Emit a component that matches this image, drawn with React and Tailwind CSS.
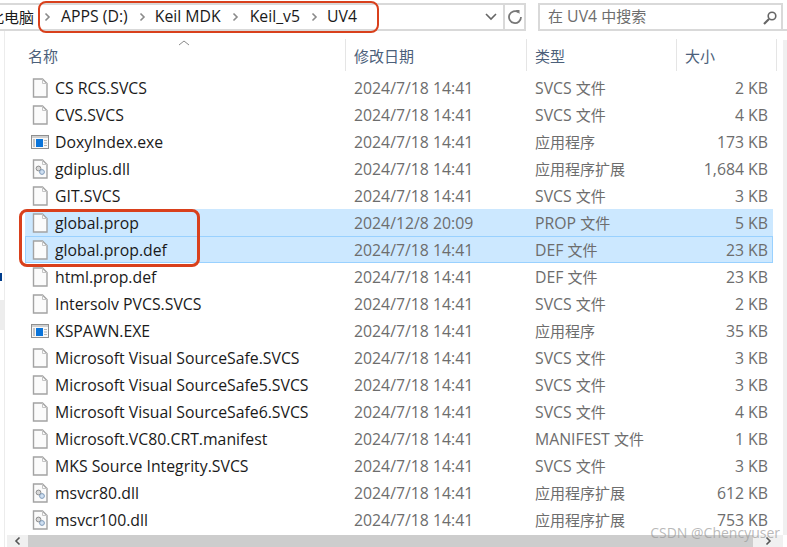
const rows = [
  ["CS RCS.SVCS", "2024/7/18 14:41", "SVCS 文件", "2 KB", "f"],
  ["CVS.SVCS", "2024/7/18 14:41", "SVCS 文件", "4 KB", "f"],
  ["DoxyIndex.exe", "2024/7/18 14:41", "应用程序", "173 KB", "e"],
  ["gdiplus.dll", "2024/7/18 14:41", "应用程序扩展", "1,684 KB", "d"],
  ["GIT.SVCS", "2024/7/18 14:41", "SVCS 文件", "3 KB", "f"],
  ["global.prop", "2024/12/8 20:09", "PROP 文件", "5 KB", "f", "s"],
  ["global.prop.def", "2024/7/18 14:41", "DEF 文件", "23 KB", "f", "a"],
  ["html.prop.def", "2024/7/18 14:41", "DEF 文件", "23 KB", "f"],
  ["Intersolv PVCS.SVCS", "2024/7/18 14:41", "SVCS 文件", "2 KB", "f"],
  ["KSPAWN.EXE", "2024/7/18 14:41", "应用程序", "35 KB", "e"],
  ["Microsoft Visual SourceSafe.SVCS", "2024/7/18 14:41", "SVCS 文件", "3 KB", "f"],
  ["Microsoft Visual SourceSafe5.SVCS", "2024/7/18 14:41", "SVCS 文件", "3 KB", "f"],
  ["Microsoft Visual SourceSafe6.SVCS", "2024/7/18 14:41", "SVCS 文件", "4 KB", "f"],
  ["Microsoft.VC80.CRT.manifest", "2024/7/18 14:41", "MANIFEST 文件", "1 KB", "f"],
  ["MKS Source Integrity.SVCS", "2024/7/18 14:41", "SVCS 文件", "3 KB", "f"],
  ["msvcr80.dll", "2024/7/18 14:41", "应用程序扩展", "612 KB", "d"],
  ["msvcr100.dll", "2024/7/18 14:41", "应用程序扩展", "753 KB", "d"],
];

function T({ children }) {
  return children.split(/([\u4e00-\u9fff]+)/).map((p, i) =>
    /[\u4e00-\u9fff]/.test(p) ? (
      <span key={i} className="text-[15px]">{p}</span>
    ) : (
      p
    )
  );
}

function Page() {
  return (
    <svg width="18" height="20" viewBox="0 0 18 20" fill="none">
      <path d="M2.5 1H11.5L16 5.5V19H2.5Z" fill="#fbfbfb" stroke="#a3a3a3" strokeWidth="1.4" />
      <path d="M11.5 1V5.5H16" stroke="#c4c4c4" />
    </svg>
  );
}
function Dll() {
  return (
    <svg width="18" height="20" viewBox="0 0 18 20" fill="none">
      <path d="M2.5 1H11.5L16 5.5V19H2.5Z" fill="#fbfbfb" stroke="#a3a3a3" strokeWidth="1.4" />
      <path d="M11.5 1V5.5H16" stroke="#c4c4c4" />
      <circle cx="7.5" cy="9.5" r="2.4" fill="#d8d8d8" stroke="#8c8c8c" />
      <circle cx="11" cy="13" r="2.4" fill="#cfe0f2" stroke="#7f9ab8" />
    </svg>
  );
}
function Exe() {
  return (
    <svg width="18" height="20" viewBox="0 0 18 20" fill="none">
      <rect x="0.5" y="3.5" width="17" height="13" fill="#f8f8f8" stroke="#8f8f8f" />
      <rect x="1" y="4" width="16" height="2" fill="#cfcfcf" />
      <rect x="2" y="7" width="2" height="8" fill="#c4c4c4" />
      <rect x="5" y="7" width="7" height="8" fill="#0a74da" />
      <path d="M13 8.5H16M13 11H16M13 13.5H16" stroke="#b5b5b5" />
    </svg>
  );
}
function Chevron() {
  return (
    <svg width="7" height="10" viewBox="0 0 7 10" fill="none" className="ml-[11px] mr-[10px] shrink-0">
      <path d="M1.5 1.5L5 5L1.5 8.5" stroke="#8a8a8a" strokeWidth="1.6" />
    </svg>
  );
}

export default function App() {
  return (
    <div
      className="relative flex h-[547px] w-[787px] flex-col overflow-hidden bg-white text-[15.8px] text-[#1a1a1a]"
      style={{ fontFamily: '"Open Sans","Noto Sans CJK SC",sans-serif' }}
    >
      <div className="flex h-[31px] items-end">
        <div className="flex h-[28px] w-[526px] items-center border-y-2 border-r-2 border-[#d9d9d9]">
          <span className="ml-[-11px] w-[44px] shrink-0 whitespace-nowrap text-[15px]">此电脑</span>
          <Chevron />
          <span className="whitespace-nowrap">APPS (D:)</span>
          <Chevron />
          <span className="ml-[-1px] whitespace-nowrap">Keil MDK</span>
          <Chevron />
          <span className="ml-[1px] whitespace-nowrap">Keil_v5</span>
          <Chevron />
          <span className="ml-[-1px]">UV4</span>
          <div className="ml-auto flex h-full items-center">
            <svg width="14" height="10" viewBox="0 0 14 10" fill="none" className="mr-[5px]">
              <path d="M2 2L7 7L12 2" stroke="#666" strokeWidth="1.6" />
            </svg>
            <div className="flex h-full w-[21px] items-center justify-center border-l-2 border-[#d9d9d9]">
              <svg width="16" height="16" viewBox="0 0 16 16" fill="none">
                <path d="M11.5 3.2A6 6 0 1 0 14 8" stroke="#777" strokeWidth="1.8" />
                <path d="M8.5 1L12.5 1L12.5 5Z" fill="#777" />
              </svg>
            </div>
          </div>
        </div>
        <div className="ml-[12px] flex h-[28px] w-[245px] items-center justify-between border-2 border-[#d9d9d9] pl-[8px] pr-[3px] text-[#6d6d6d]">
          <span><T>在 UV4 中搜索</T></span>
          <svg width="16" height="16" viewBox="0 0 16 16" fill="none" className="mt-[2px]">
            <circle cx="10" cy="6" r="3.8" stroke="#666" strokeWidth="1.6" />
            <path d="M7 9L2 14" stroke="#666" strokeWidth="2.2" />
          </svg>
        </div>
        <div className="h-[2px] w-[4px] bg-[#d9d9d9]" />
      </div>

      <div className="flex min-h-0 flex-1">
        <div className="flex w-[5px] shrink-0 flex-col border-r border-[#ececec]">
          <div className="mt-[242px] h-[8px] w-[2px] bg-[#003c8c]" />
          <div className="mt-[19px] h-[30px] w-[4px] bg-[#ededed]" />
        </div>
        <div className="flex min-w-0 flex-1 flex-col">
          <div className="relative flex h-[43px] shrink-0 items-end pb-[3px] pl-[20px] text-[15px] text-[#4c607a]">
            <svg width="12" height="6" viewBox="0 0 12 6" fill="none" className="absolute left-[173px] top-[9px]">
              <path d="M1 5L6 1L11 5" stroke="#8a8a8a" />
            </svg>
            <div className="flex h-[32px] w-[321px] items-center border-r border-[#e5e5e5] pl-[3px] pt-[2px]">名称</div>
            <div className="flex h-[32px] w-[181px] items-center border-r border-[#e5e5e5] pl-[8px] pt-[2px]">修改日期</div>
            <div className="flex h-[32px] w-[150px] items-center border-r border-[#e5e5e5] pl-[8px] pt-[2px]">类型</div>
            <div className="flex h-[32px] w-[100px] items-center border-r border-[#e5e5e5] pl-[8px] pt-[2px]">大小</div>
          </div>
          <div className="flex-1 overflow-hidden pl-[20px]">
            {rows.map((r) => (
              <div
                key={r[0]}
                className={
                  "flex h-[27px] w-[748px] items-center " +
                  (r[5] === "s"
                    ? "bg-[#cce8ff]"
                    : r[5] === "a"
                      ? "bg-[#cce8ff] outline outline-1 -outline-offset-1 outline-[#99d1ff]"
                      : "")
                }
              >
                <div className="flex w-[322px] items-center pl-[6px]">
                  {r[4] === "f" ? <Page /> : r[4] === "d" ? <Dll /> : <Exe />}
                  <span className="ml-[6px] whitespace-nowrap pt-[2px]">{r[0]}</span>
                </div>
                <div className="w-[181px] pl-[7px] pt-[2px] text-[#6d6d6d]">{r[1]}</div>
                <div className="w-[150px] whitespace-nowrap pl-[7px] pt-[2px] text-[#6d6d6d]"><T>{r[2]}</T></div>
                <div className="w-[90px] pt-[2px] text-right text-[#6d6d6d]">{r[3]}</div>
              </div>
            ))}
          </div>
          <div className="ml-[2px] flex h-[12px] shrink-0 items-center bg-[#f0f0f0]">
            <div className="flex h-full w-[21px] items-center justify-center">
              <svg width="7" height="10" viewBox="0 0 7 10" fill="none">
                <path d="M5.5 1.5L2 5L5.5 8.5" stroke="#555" strokeWidth="1.6" />
              </svg>
            </div>
            <div className="h-full w-[725px] bg-[#cdcdcd]" />
            <div className="flex h-full w-[30px] items-center justify-center">
              <svg width="7" height="10" viewBox="0 0 7 10" fill="none">
                <path d="M1.5 1.5L5 5L1.5 8.5" stroke="#555" strokeWidth="1.6" />
              </svg>
            </div>
          </div>
        </div>
        <div className="mb-[12px] mt-[9px] w-[4px] shrink-0 bg-[#f0f0f0]" />
      </div>

      <div className="pointer-events-none absolute left-[38px] top-[1px] h-[32px] w-[341px] rounded-[8px] border-2 border-[#d9401c]" />
      <div className="pointer-events-none absolute left-[19px] top-[209px] h-[58px] w-[181px] rounded-[8px] border-[3px] border-[#d9401c]" />
      <div className="pointer-events-none absolute bottom-[4px] right-[7px] whitespace-nowrap text-[14px] text-[#9a9a9a]/70">
        CSDN @Chencyuser
      </div>
    </div>
  );
}
